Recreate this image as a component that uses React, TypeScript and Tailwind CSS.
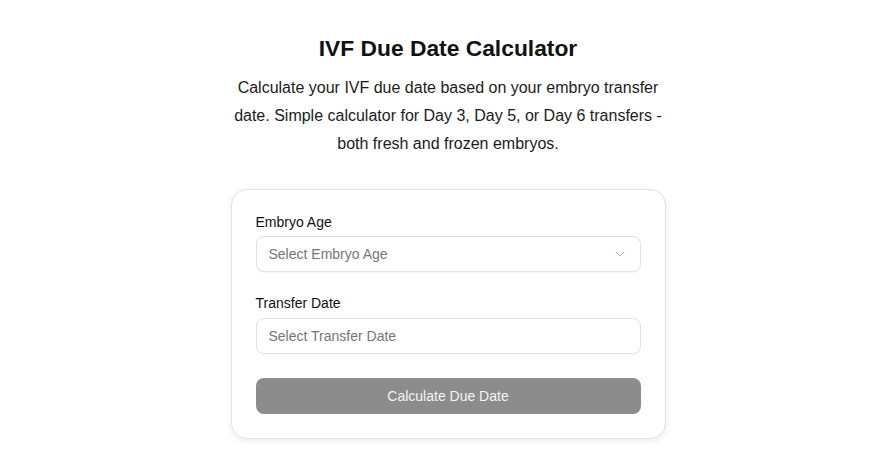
import { ChevronDown } from "lucide-react";
import React from "react";

const font = { fontFamily: '"Liberation Sans", Arial, sans-serif' };

const App = () => {
  return (
    <div
      className="min-h-screen bg-white text-[#111] pl-2 flex flex-col items-center"
      style={font}
    >
      {/* Heading */}
      <h1 className="mt-8 text-[22.8px] leading-8 font-bold text-[#111]">
        IVF Due Date Calculator
      </h1>
      <p className="mt-[10px] w-[440px] text-center text-base leading-7 text-[#1c1c1c]">
        Calculate your IVF due date based on your embryo transfer date. Simple
        calculator for Day 3, Day 5, or Day 6 transfers - both fresh and frozen
        embryos.
      </p>

      {/* Form card */}
      <div className="mt-[31px] w-[435px] rounded-2xl border border-[#e3e3e3] bg-white px-6 pt-[22px] pb-6 shadow-[0_2px_6px_rgba(0,0,0,0.08)]">
        <div className="flex flex-col">
          <label className="text-sm leading-5 text-[#111] mb-1">Embryo Age</label>
          <button className="h-9 w-full flex items-center justify-between rounded-lg border border-[#e2e2e2] bg-white px-3 text-sm text-[#767676] shadow-[0_1px_2px_rgba(0,0,0,0.04)]">
            <span>Select Embryo Age</span>
            <ChevronDown className="h-4 w-4 text-[#b5b5b5]" strokeWidth={1.5} />
          </button>
        </div>

        <div className="mt-[21px] flex flex-col">
          <label className="text-sm leading-5 text-[#111] mb-[5px]">Transfer Date</label>
          <div className="h-9 w-full flex items-center rounded-lg border border-[#e2e2e2] bg-white px-3 text-sm text-[#767676] shadow-[0_1px_2px_rgba(0,0,0,0.04)]">
            Select Transfer Date
          </div>
        </div>

        <button className="mt-6 h-9 w-full rounded-lg bg-[#8c8c8c] text-sm text-[#f4f4f4]">
          Calculate Due Date
        </button>
      </div>
    </div>
  );
};

export default App;
